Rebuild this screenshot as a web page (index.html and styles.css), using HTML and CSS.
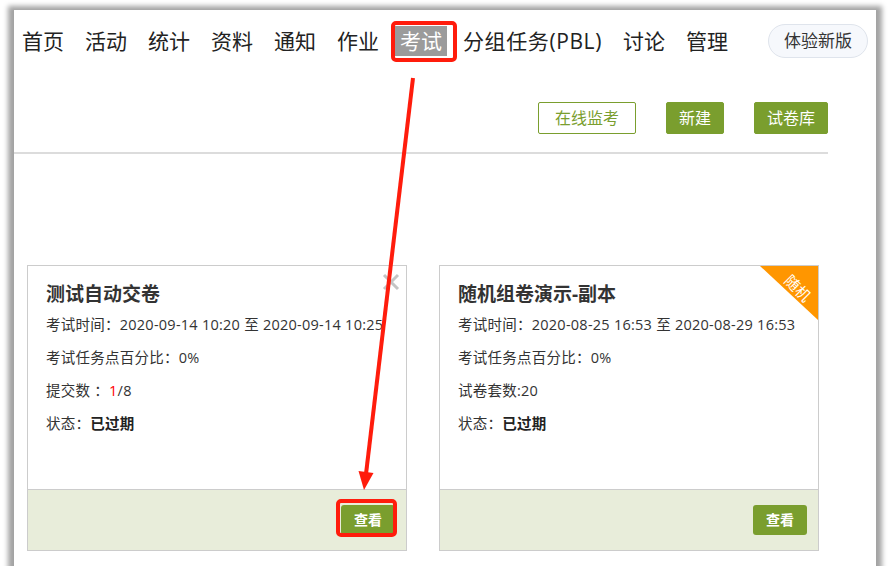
FILE: index.html
```html
<!DOCTYPE html>
<html lang="zh-CN">
<head>
  <meta charset="UTF-8">
  <title>考试</title>
  <link rel="stylesheet" href="styles.css">
</head>
<body>
<div class="frame">
  <!-- Top navigation -->
  <div class="nav">
    <a class="nav-item">首页</a>
    <a class="nav-item">活动</a>
    <a class="nav-item">统计</a>
    <a class="nav-item">资料</a>
    <a class="nav-item">通知</a>
    <a class="nav-item">作业</a>
    <a class="nav-item active">考试</a>
    <a class="nav-item pbl">分组任务(PBL)</a>
    <a class="nav-item">讨论</a>
    <a class="nav-item">管理</a>
    <span class="new-version">体验新版</span>
  </div>

  <!-- Toolbar -->
  <div class="toolbar">
    <span class="btn btn-outline">在线监考</span>
    <span class="btn btn-green">新建</span>
    <span class="btn btn-green">试卷库</span>
  </div>

  <!-- Exam cards -->
  <div class="cards">
    <div class="card">
      <div class="card-body">
        <svg class="close" width="18" height="18" viewBox="0 0 18 18">
          <path d="M2 2 L16 16 M16 2 L2 16" stroke="#c4c4c4" stroke-width="3" fill="none"/>
        </svg>
        <h3>测试自动交卷</h3>
        <p>考试时间：2020-09-14 10:20 至 2020-09-14 10:25</p>
        <p>考试任务点百分比：0%</p>
        <p>提交数 ：<span class="red">1</span>/8</p>
        <p>状态：<b>已过期</b></p>
      </div>
      <div class="card-foot">
        <span class="btn-view">查看</span>
      </div>
    </div>
    <div class="card">
      <div class="card-body">
        <div class="ribbon"></div>
        <span class="ribbon-text">随机</span>
        <h3>随机组卷演示-副本</h3>
        <p>考试时间：2020-08-25 16:53 至 2020-08-29 16:53</p>
        <p>考试任务点百分比：0%</p>
        <p>试卷套数:20</p>
        <p>状态：<b>已过期</b></p>
      </div>
      <div class="card-foot">
        <span class="btn-view">查看</span>
      </div>
    </div>
  </div>

  <!-- Annotation overlay -->
  <div class="mark mark-nav"></div>
  <div class="mark mark-view"></div>
  <svg class="arrow" width="862" height="556" viewBox="0 0 862 556">
    <line x1="399" y1="68" x2="352" y2="464" stroke="#ff1c0c" stroke-width="4"/>
    <polygon points="350,480 359.5,463 344.5,461" fill="#ff1c0c"/>
  </svg>
</div>
</body>
</html>
```

FILE: styles.css
```css
body {
  margin: 0;
  background: #fff;
  font-family: "Open Sans", "Noto Sans CJK SC", sans-serif;
  color: #333;
}
.frame {
  position: relative;
  margin: 10px 0 0 14px;
  width: 862px;
  height: 556px;
  background: #fff;
  box-shadow: 0 2px 5px 6px #a3a3a3;
}
.nav {
  display: flex;
  align-items: center;
  height: 61px;
  margin-bottom: 3px;
  padding: 0 8px;
  gap: 21px;
}
.nav-item {
  font-size: 21px;
  line-height: 30px;
  color: #222;
}
.nav-item.active {
  background: #9b9b9b;
  color: #fff;
  padding: 0 5px;
  margin: 0 -5px;
}
.nav-item.pbl {
  letter-spacing: 0.6px;
}
.new-version {
  margin-left: auto;
  height: 32px;
  line-height: 32px;
  padding: 0 15px;
  border: 1px solid #dfe4ec;
  border-radius: 17px;
  background: #f6f8fc;
  font-size: 17px;
  color: #333;
}
.toolbar {
  width: 814px;
  display: flex;
  justify-content: flex-end;
  gap: 30px;
  padding-top: 28px;
  padding-bottom: 18px;
  border-bottom: 2px solid #dcdcdc;
}
.btn {
  height: 30px;
  line-height: 30px;
  font-size: 16px;
  border: 1px solid #7a9e2e;
  border-radius: 2px;
  padding: 0 12px;
}
.btn-outline {
  color: #7a9e2e;
  padding: 0 16px;
}
.btn-green {
  background: #7a9e2e;
  color: #fff;
}
.cards {
  display: flex;
  gap: 32px;
  margin-top: 111px;
  padding-left: 13px;
}
.card {
  width: 378px;
  height: 284px;
  border: 1px solid #cccccc;
  display: flex;
  flex-direction: column;
}
.card-body {
  position: relative;
  flex: 1;
  padding: 14px 0 0 18px;
  overflow: hidden;
}
.card h3 {
  margin: 0 0 7px;
  font-size: 19px;
  line-height: 28px;
  font-weight: bold;
  color: #333;
}
.card p {
  margin: 0 0 13px;
  font-size: 14.5px;
  line-height: 20px;
  letter-spacing: 0.25px;
  color: #333;
  white-space: nowrap;
}
.card p b {
  color: #222;
}
.red {
  color: #f00;
}
.close {
  position: absolute;
  top: 7px;
  right: 6px;
}
.ribbon {
  position: absolute;
  top: 0;
  right: 0;
  width: 58px;
  height: 54px;
  background: #ff9600;
  clip-path: polygon(0 0, 100% 0, 100% 100%);
}
.ribbon-text {
  position: absolute;
  top: 13px;
  right: 2px;
  width: 36px;
  text-align: center;
  font-size: 15px;
  line-height: 18px;
  color: #fff;
  transform: rotate(45deg);
}
.card-foot {
  height: 60px;
  border-top: 1px solid #cccccc;
  background: #e8edda;
  display: flex;
  align-items: center;
  justify-content: flex-end;
  padding-right: 11px;
}
.btn-view {
  width: 54px;
  height: 30px;
  line-height: 30px;
  text-align: center;
  background: #7a9e2e;
  color: #fff;
  font-size: 14px;
  font-weight: bold;
  border-radius: 3px;
}
.mark {
  position: absolute;
  border: 4px solid #ff1c0c;
  border-radius: 5px;
}
.mark-nav {
  left: 377px;
  top: 11px;
  width: 58px;
  height: 33px;
}
.mark-view {
  left: 322px;
  top: 489px;
  width: 53px;
  height: 30px;
}
.arrow {
  position: absolute;
  left: 0;
  top: 0;
}
```
